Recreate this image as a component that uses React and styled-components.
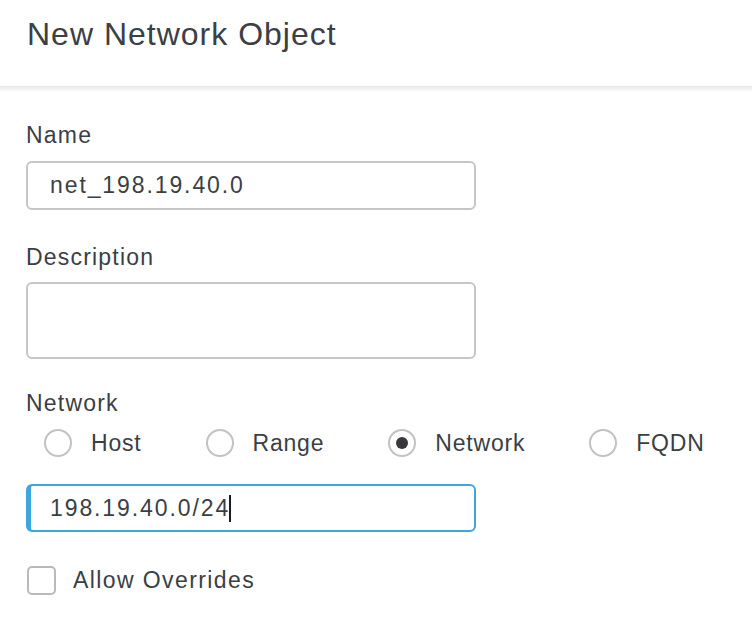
import React from "react";
import styled, { createGlobalStyle } from "styled-components";

const Global = createGlobalStyle`
  html, body { margin: 0; padding: 0; background: #ffffff; }
  body { font-family: "Liberation Sans", Arial, sans-serif; color: #3b3f44; }
  * { box-sizing: border-box; }
`;

const Page = styled.div`
  width: 752px;
  height: 640px;
  background: #fff;
  overflow: hidden;
`;

const Header = styled.header`
  height: 86px;
  padding: 18px 0 0 27px;
`;

const Title = styled.h1`
  margin: 0;
  font-size: 32px;
  line-height: 32px;
  font-weight: 400;
  letter-spacing: 1px;
  color: #3b4045;
`;

const Divider = styled.div`
  height: 6px;
  background: linear-gradient(#e9e9e9, #f4f4f4 60%, #ffffff);
`;

const Form = styled.form`
  padding: 29px 0 0 26px;
  display: flex;
  flex-direction: column;
`;

const Label = styled.label`
  display: block;
  font-size: 23px;
  line-height: 28px;
  letter-spacing: 1.2px;
  color: #3b3f44;
  margin-top: ${(p) => p.$mt || 0}px;
  margin-bottom: ${(p) => p.$mb ?? 12}px;
`;

const TextInput = styled.input`
  width: 450px;
  height: 49px;
  border: 2px solid #c6c6c6;
  border-radius: 6px;
  padding: 0 0 0 22px;
  font-family: "Liberation Sans", Arial, sans-serif;
  font-size: 23px;
  letter-spacing: 1.9px;
  color: #3b3f44;
  background: #fff;
  outline: none;
`;

const TextArea = styled.textarea`
  display: block;
  width: 450px;
  height: 77px;
  border: 2px solid #c6c6c6;
  border-radius: 6px;
  resize: none;
  outline: none;
  background: #fff;
`;

const RadioRow = styled.div`
  display: flex;
  align-items: center;
  gap: 64px;
  padding-left: 18px;
  margin-top: 12px;
  height: 28px;
`;

const RadioItem = styled.label`
  display: flex;
  align-items: center;
  gap: 19px;
  font-size: 23px;
  letter-spacing: 0.8px;
  color: #3b3f44;
`;

const RadioCircle = styled.span`
  width: 28px;
  height: 28px;
  border-radius: 50%;
  border: 2px solid #c2c2c2;
  background: #fff;
  display: flex;
  align-items: center;
  justify-content: center;
  &::after {
    content: "";
    width: 12px;
    height: 12px;
    border-radius: 50%;
    background: ${(p) => (p.$checked ? "#37393c" : "transparent")};
  }
`;

const FocusedField = styled.div`
  width: 450px;
  height: 48px;
  margin-top: 27px;
  border: 2px solid #3ba7dd;
  border-left-width: 5px;
  border-radius: 6px;
  padding-left: 19px;
  display: flex;
  align-items: center;
  font-size: 23px;
  letter-spacing: 1.9px;
  color: #3b3f44;
`;

const Caret = styled.span`
  display: inline-block;
  width: 2px;
  height: 27px;
  background: #1c1c1c;
  margin-left: -1px;
`;

const CheckRow = styled.label`
  display: flex;
  align-items: center;
  gap: 17px;
  margin-top: 34px;
  padding-left: 1px;
  font-size: 23px;
  letter-spacing: 1.4px;
  color: #3b3f44;
`;

const CheckBox = styled.span`
  width: 29px;
  height: 29px;
  border: 2px solid #b9b9b9;
  border-radius: 5px;
  background: #fff;
`;

const options = ["Host", "Range", "Network", "FQDN"];

export default function App() {
  return (
    <Page>
      <Global />
      <Header>
        <Title>New Network Object</Title>
      </Header>
      <Divider />
      <Form onSubmit={(e) => e.preventDefault()}>
        <Label>Name</Label>
        <TextInput defaultValue="net_198.19.40.0" />
        <Label $mt={33} $mb={11}>Description</Label>
        <TextArea />
        <Label $mt={30} $mb={0}>Network</Label>
        <RadioRow>
          {options.map((o) => (
            <RadioItem key={o}>
              <RadioCircle $checked={o === "Network"} />
              {o}
            </RadioItem>
          ))}
        </RadioRow>
        <FocusedField>
          198.19.40.0/24
          <Caret />
        </FocusedField>
        <CheckRow>
          <CheckBox />
          Allow Overrides
        </CheckRow>
      </Form>
    </Page>
  );
}
